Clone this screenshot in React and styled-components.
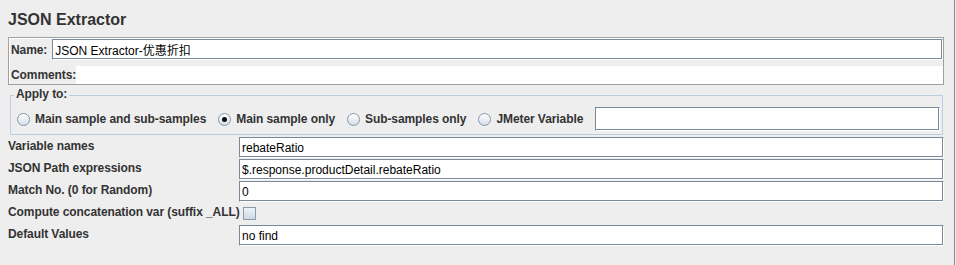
import React from 'react'
import styled, { createGlobalStyle } from 'styled-components'

const slate = '#7a8a99';
const ink = '#333333';

const GlobalStyle = createGlobalStyle`
    html, body{
        margin: 0;
        padding: 0;
        background: #eeeeee;
        font-family: "Liberation Sans", "Noto Sans CJK SC", sans-serif;
    }
`;

const Frame = styled.div`
    display: flex;
    width: 956px;
    height: 265px;
    overflow: hidden;
    background: #eeeeee;
`;

const Panel = styled.div`
    flex: 1;
    padding: 0 10px 0 8px;
`;

const Divider = styled.div`
    width: 1px;
    margin-right: 1px;
    background: #8c8c8c;
`;

const Title = styled.h1`
    margin: 0 0 8px 0;
    padding-top: 11px;
    font-size: 16px;
    line-height: 18px;
    font-weight: bold;
    color: ${ink};
`;

const NameBox = styled.div`
    display: flex;
    flex-direction: column;
    gap: 6px;
    padding: 1px 0 0 1px;
    border: 1px solid #a0a0a0;
    box-shadow: inset 1px 1px 0 #ffffff;
`;

const BoxRow = styled.div`
    display: flex;
    align-items: center;
    height: ${p => p.$h}px;
    gap: ${p => p.$gap}px;
    padding-left: 1px;
`;

const Label = styled.span`
    font-size: 12px;
    line-height: 14px;
    font-weight: bold;
    letter-spacing: -0.08px;
    color: ${ink};
    white-space: nowrap;
    align-self: ${p => (p.$top ? 'start' : 'center')};
    padding-top: ${p => (p.$top ? '2px' : '0')};
`;

const TextField = styled.div`
    box-sizing: border-box;
    flex: 1;
    height: ${p => p.$h || 21}px;
    display: flex;
    align-items: center;
    padding: 0 2px;
    background: #ffffff;
    border: 1px solid;
    border-color: ${slate} #ffffff #ffffff ${slate};
    box-shadow: inset -1px -1px 0 ${slate};
    font-size: 12px;
    color: #000000;
    white-space: nowrap;
    overflow: hidden;
`;

const PlainField = styled.div`
    flex: 1;
    height: 18px;
    background: #ffffff;
`;

const Group = styled.div`
    position: relative;
    margin: 10px 1px 0 2px;
    padding: 11px 2px 3px 6px;
    border: 1px solid #b8cfe6;
`;

const Legend = styled.span`
    position: absolute;
    top: -9px;
    left: 3px;
    padding: 0 2px;
    background: #eeeeee;
    font-size: 12px;
    line-height: 14px;
    font-weight: bold;
    letter-spacing: -0.08px;
    color: ${ink};
`;

const RadioRow = styled.div`
    display: flex;
    align-items: center;
    gap: 12px;
    height: 24px;
`;

const RadioItem = styled.label`
    display: flex;
    align-items: center;
    gap: 5px;
    font-size: 12px;
    line-height: 14px;
    font-weight: bold;
    letter-spacing: -0.08px;
    color: ${ink};
    white-space: nowrap;
`;

const RadioDot = styled.span`
    box-sizing: border-box;
    width: 13px;
    height: 13px;
    border-radius: 50%;
    border: 1px solid #8496a8;
    background: linear-gradient(to bottom, #ffffff, #d6dee8);
    display: flex;
    align-items: center;
    justify-content: center;
    &::after{
        content: '';
        width: 5px;
        height: 5px;
        border-radius: 50%;
        background: ${p => (p.$on ? '#111111' : 'transparent')};
    }
`;

const Grid = styled.div`
    display: grid;
    grid-template-columns: 231px 1fr;
    row-gap: 1px;
    margin-top: 2px;
`;

const Cell = styled.div`
    display: flex;
    align-items: center;
    height: 21px;
`;

const Check = styled.span`
    box-sizing: border-box;
    width: 13px;
    height: 13px;
    margin-left: 4px;
    border: 1px solid #8a9aab;
    background: linear-gradient(to bottom, #eef3f8, #cdd9e6);
`;

const radios = [
    { label: 'Main sample and sub-samples', on: false },
    { label: 'Main sample only', on: true },
    { label: 'Sub-samples only', on: false },
    { label: 'JMeter Variable', on: false },
];

const rows = [
    { label: 'Variable names', value: 'rebateRatio' },
    { label: 'JSON Path expressions', value: '$.response.productDetail.rebateRatio' },
    { label: 'Match No. (0 for Random)', value: '0' },
    { label: 'Compute concatenation var (suffix _ALL)', check: true },
    { label: 'Default Values', value: 'no find' },
];

const App = () => {
    return(
        <Frame>
            <GlobalStyle />
            <Panel>
                <Title>JSON Extractor</Title>
                <NameBox>
                    <BoxRow $h={21} $gap={5}>
                        <Label>Name:</Label>
                        <TextField>JSON Extractor-优惠折扣</TextField>
                    </BoxRow>
                    <BoxRow $h={18} $gap={0}>
                        <Label>Comments:</Label>
                        <PlainField />
                    </BoxRow>
                </NameBox>
                <Group>
                    <Legend>Apply to:</Legend>
                    <RadioRow>
                        {radios.map(r => (
                            <RadioItem key={r.label}>
                                <RadioDot $on={r.on} />
                                {r.label}
                            </RadioItem>
                        ))}
                        <TextField $h={24} />
                    </RadioRow>
                </Group>
                <Grid>
                    {rows.map(r => (
                        <React.Fragment key={r.label}>
                            <Cell>
                                <Label $top>{r.label}</Label>
                            </Cell>
                            <Cell>
                                {r.check ? <Check /> : <TextField>{r.value}</TextField>}
                            </Cell>
                        </React.Fragment>
                    ))}
                </Grid>
            </Panel>
            <Divider />
        </Frame>
    )
}

export default App
